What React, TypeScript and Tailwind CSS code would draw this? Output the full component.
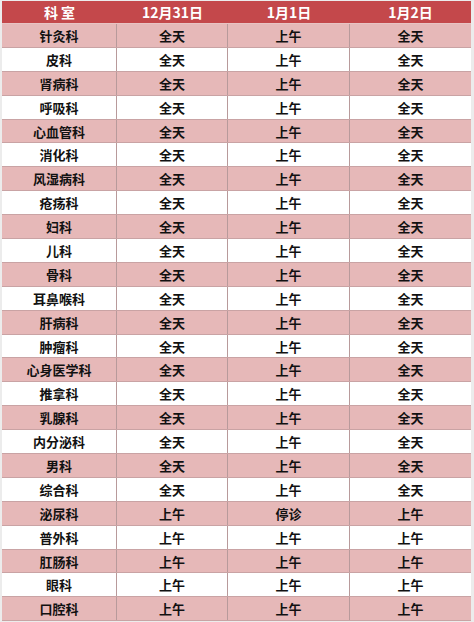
const rows: [string, string, string, string][] = [
  ['针灸科', '全天', '上午', '全天'],
  ['皮科', '全天', '上午', '全天'],
  ['肾病科', '全天', '上午', '全天'],
  ['呼吸科', '全天', '上午', '全天'],
  ['心血管科', '全天', '上午', '全天'],
  ['消化科', '全天', '上午', '全天'],
  ['风湿病科', '全天', '上午', '全天'],
  ['疮疡科', '全天', '上午', '全天'],
  ['妇科', '全天', '上午', '全天'],
  ['儿科', '全天', '上午', '全天'],
  ['骨科', '全天', '上午', '全天'],
  ['耳鼻喉科', '全天', '上午', '全天'],
  ['肝病科', '全天', '上午', '全天'],
  ['肿瘤科', '全天', '上午', '全天'],
  ['心身医学科', '全天', '上午', '全天'],
  ['推拿科', '全天', '上午', '全天'],
  ['乳腺科', '全天', '上午', '全天'],
  ['内分泌科', '全天', '上午', '全天'],
  ['男科', '全天', '上午', '全天'],
  ['综合科', '全天', '上午', '全天'],
  ['泌尿科', '上午', '停诊', '上午'],
  ['普外科', '上午', '上午', '上午'],
  ['肛肠科', '上午', '上午', '上午'],
  ['眼科', '上午', '上午', '上午'],
  ['口腔科', '上午', '上午', '上午'],
];

const cols = 'grid grid-cols-[115px_111px_122px_1fr]';

export default function App() {
  return (
    <div
      className="w-[474px] h-[622px] overflow-hidden bg-[#ececec] pl-[2px] pr-[3px] pt-[1px]"
      style={{ fontFamily: '"Noto Sans CJK SC", "Noto Sans", sans-serif' }}
    >
      <div className={`${cols} h-[23px] bg-[#c4484b] text-white text-[14px] font-bold border-b border-[#e8c4c4]`}>
        <div className="flex items-center justify-center">科 室</div>
        <div className="flex items-center justify-center">12月31日</div>
        <div className="flex items-center justify-center">1月1日</div>
        <div className="flex items-center justify-center">1月2日</div>
      </div>
      {rows.map((r, i) => (
        <div
          key={r[0]}
          className={`${cols} h-[23.9px] text-[13px] font-bold text-[#111] border-b border-[#c9a3a4] ${
            i % 2 === 0 ? 'bg-[#e6b8b8]' : 'bg-white'
          }`}
        >
          {r.map((c, j) => (
            <div
              key={j}
              className={`flex items-center justify-center leading-none ${j < 3 ? 'border-r border-[#b89a9b]' : ''}`}
            >
              {c}
            </div>
          ))}
        </div>
      ))}
    </div>
  );
}
